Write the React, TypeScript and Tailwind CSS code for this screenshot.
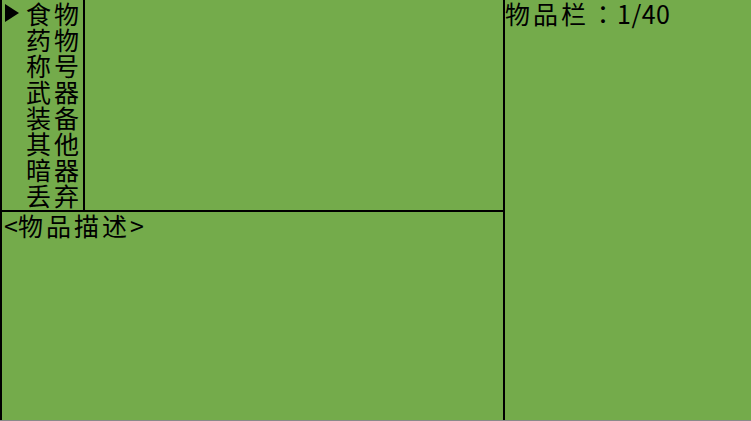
const items = ['食物', '药物', '称号', '武器', '装备', '其他', '暗器', '丢弃'];

const font = { fontFamily: '"Noto Sans CJK SC", "Noto Sans", sans-serif' };

export default function App() {
  const selected = 0;

  return (
    <div
      className="w-[751px] h-[421px] bg-[#74ab4b] text-black flex border-b border-[#8a8a8a] overflow-hidden"
      style={font}
    >
      {/* left column */}
      <div className="w-[503px] flex flex-col border-l-2 border-black">
        <div className="h-[210px] flex">
          <div className="w-[83px] border-r-2 border-black flex flex-col">
            {items.map((name, i) => (
              <div key={name} className="h-[26px] flex items-center relative">
                {i === selected && (
                  <svg className="absolute left-[3px] top-[4px]" width="14" height="18" viewBox="0 0 14 18">
                    <polygon points="0,0 14,9 0,18" fill="#000" />
                  </svg>
                )}
                <span className="pl-[24px] text-[25px] leading-[26px] tracking-[3px] whitespace-nowrap">{name}</span>
              </div>
            ))}
          </div>
        </div>
        <div className="flex-1 border-t-2 border-black">
          <div className="pl-[2px] text-[25px] leading-[26px] whitespace-nowrap">
            &lt;<span className="tracking-[3px]">物品描述</span>&gt;
          </div>
        </div>
      </div>
      {/* right column */}
      <div className="flex-1 border-l-2 border-black">
        <div className="text-[25px] leading-[26px] whitespace-nowrap">
          <span className="tracking-[3px]">物品栏</span>
          <span className="inline-block w-[28px] text-center" style={{ fontFamily: '"Noto Sans CJK JP", sans-serif' }}>：</span>
          <span className="tracking-[0.5px]">1/40</span>
        </div>
      </div>
    </div>
  );
}
